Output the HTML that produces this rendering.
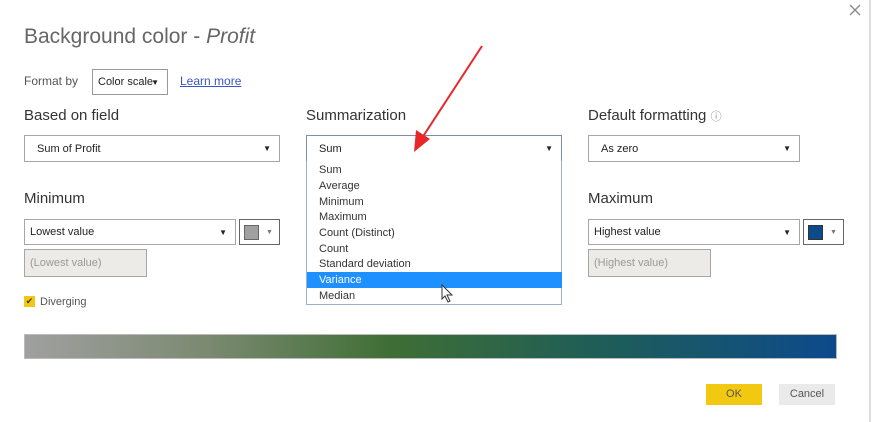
<!DOCTYPE html>
<html><head><style>
*{margin:0;padding:0;box-sizing:border-box}
body{width:875px;height:422px;background:#fff;font-family:"Liberation Sans",sans-serif;position:relative;overflow:hidden;color:#333}
.a{position:absolute}
.box{position:absolute;border:1px solid #a6a6a6;background:#fff;font-size:11px;color:#222;padding-left:8px;display:flex;align-items:center}
.dd::after{content:"\25BC";position:absolute;right:8px;font-size:8px;color:#222}
.lbl{position:absolute;font-size:15px;color:#333}
.it{position:absolute;left:12px;font-size:11px;color:#333}
</style></head><body>
<div class="a" style="left:24px;top:25px;font-size:21px;color:#666">Background color - <i>Profit</i></div>
<svg class="a" style="left:849px;top:4px" width="12" height="12"><path d="M1 1 L11 11 M11 1 L1 11" stroke="#888" stroke-width="1.3"/></svg>
<div class="a" style="left:869px;top:0;width:2px;height:422px;background:#ddd"></div>
<div class="a" style="left:24px;top:74px;font-size:12px;color:#555">Format by</div>
<div class="box dd" style="left:92px;top:69px;width:76px;height:26px;border-color:#999;padding-left:5px">Color scale</div>
<div class="a" style="left:180px;top:74px;font-size:12px;color:#3a55c8;text-decoration:underline">Learn more</div>
<div class="lbl" style="left:24px;top:107px">Based on field</div>
<div class="lbl" style="left:306px;top:107px">Summarization</div>
<div class="lbl" style="left:588px;top:107px">Default formatting <span style="font-size:11px;color:#888">ⓘ</span></div>
<div class="box dd" style="left:24px;top:135px;width:256px;height:27px;padding-left:12px">Sum of Profit</div>
<div class="box dd" style="left:306px;top:135px;width:256px;height:27px;padding-left:12px;border-color:#7a8fb0">Sum</div>
<div class="box dd" style="left:588px;top:135px;width:212px;height:27px;padding-left:12px">As zero</div>
<div class="a" style="left:306px;top:161px;width:256px;height:144px;border:1px solid #9cb0cc;border-top:none;background:#fff">
<div class="it" style="top:3px">Sum</div>
<div class="it" style="top:19px">Average</div>
<div class="it" style="top:35px">Minimum</div>
<div class="it" style="top:50px">Maximum</div>
<div class="it" style="top:66px">Count (Distinct)</div>
<div class="it" style="top:82px">Count</div>
<div class="it" style="top:97px">Standard deviation</div>
<div class="a" style="left:0;top:111px;width:255px;height:16px;background:#1e90ff"></div>
<div class="it" style="top:113px;color:#fff">Variance</div>
<div class="it" style="top:129px">Median</div>
</div>
<svg class="a" style="left:440px;top:284px" width="14" height="20"><path d="M2 1 L2 15 L5 12 L8 18 L10 17 L7 11 L12 11 Z" fill="#fff" stroke="#333" stroke-width="1"/></svg>
<div class="lbl" style="left:24px;top:190px">Minimum</div>
<div class="lbl" style="left:588px;top:190px">Maximum</div>
<div class="box dd" style="left:24px;top:219px;width:212px;height:26px;padding-left:5px">Lowest value</div>
<div class="box" style="left:239px;top:219px;width:41px;height:26px;border-color:#666;padding-left:4px"><span style="width:15px;height:15px;background:#a0a0a0;border:1px solid #666;display:inline-block"></span><span style="font-size:7px;color:#777;margin-left:7px">▼</span></div>
<div class="box" style="left:24px;top:249px;width:123px;height:28px;background:#ecebe8;color:#999;padding-left:5px">(Lowest value)</div>
<div class="box dd" style="left:588px;top:219px;width:212px;height:26px;padding-left:5px">Highest value</div>
<div class="box" style="left:803px;top:219px;width:41px;height:26px;border-color:#666;padding-left:4px"><span style="width:15px;height:15px;background:#0d4a8c;border:1px solid #333;display:inline-block"></span><span style="font-size:7px;color:#777;margin-left:7px">▼</span></div>
<div class="box" style="left:588px;top:249px;width:123px;height:28px;background:#ecebe8;color:#999;padding-left:5px">(Highest value)</div>
<div class="a" style="left:24px;top:296px;width:11px;height:11px;background:#f2c811;color:#333;font-size:9px;line-height:11px;text-align:center">✔</div>
<div class="a" style="left:40px;top:296px;font-size:11px;color:#555">Diverging</div>
<div class="a" style="left:24px;top:334px;width:813px;height:25px;border:1px solid #bbb;background:linear-gradient(90deg,#a0a0a0 0%,#7c8a72 22%,#3f6e35 45%,#1f5e56 70%,#0d4a8c 100%)"></div>
<div class="a" style="left:706px;top:384px;width:56px;height:21px;background:#f2c811;font-size:11px;color:#555;text-align:center;line-height:21px">OK</div>
<div class="a" style="left:779px;top:384px;width:56px;height:21px;background:#eaeaea;font-size:11px;color:#555;text-align:center;line-height:21px">Cancel</div>
<svg class="a" style="left:0;top:0" width="875" height="422"><line x1="482" y1="46" x2="422" y2="138" stroke="#e8272a" stroke-width="2"/><path d="M414 152 L416 130 L430 139 Z" fill="#e8272a"/></svg>
</body></html>
